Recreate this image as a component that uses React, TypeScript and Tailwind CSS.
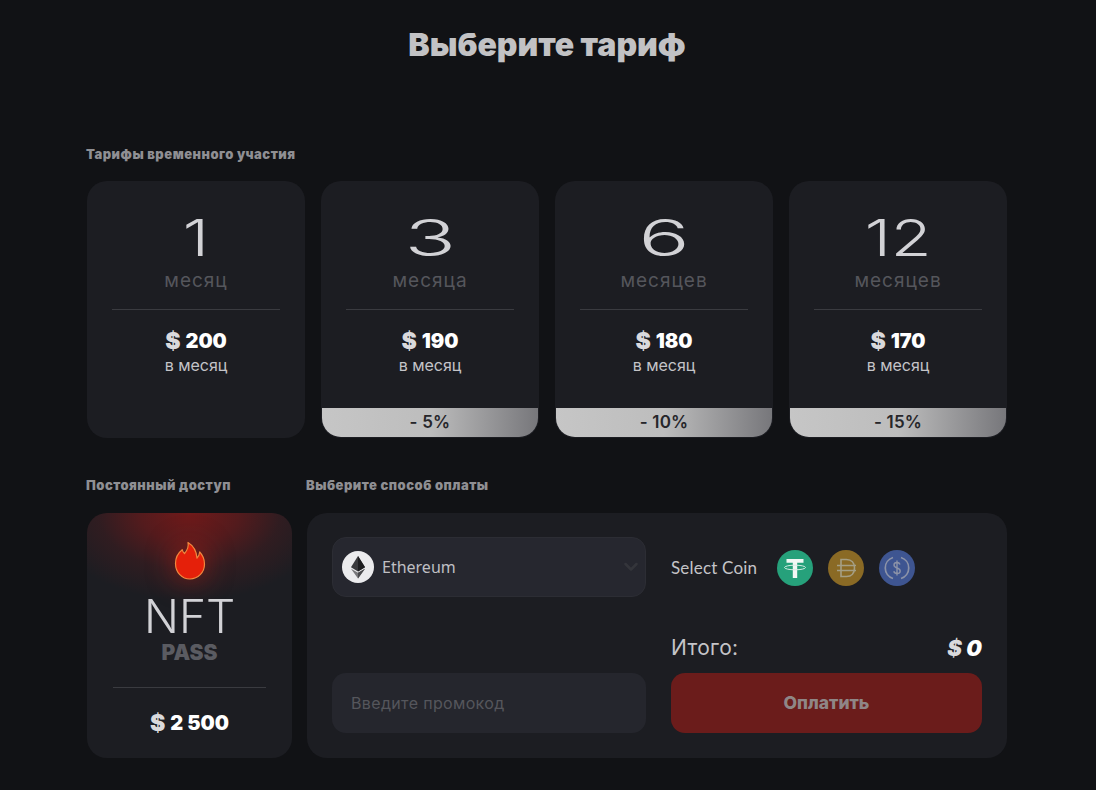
const inter = "font-['Inter','Liberation_Sans',sans-serif]";

function Plan({ n, unit, price, off, wide }: { n: string; unit: string; price: string; off?: string; wide?: boolean }) {
  return (
    <div className="relative h-[257px] w-[218px] overflow-hidden rounded-[20px] bg-[#1c1d22] px-[25px] pt-[28px]">
      <div className="flex h-[58px] items-center justify-center">
        <span className={`inline-block origin-center text-[50px] font-light leading-none text-[#d2d2d6] ${wide ? "scale-x-[1.7]" : "scale-x-[1.33]"}`}>{n}</span>
      </div>
      <div className="mt-[3px] text-center text-[19px] leading-[22px] tracking-[1px] text-[#55565c]">{unit}</div>
      <div className="mt-[17px] h-px bg-[#3a3b40]" />
      <div className="mt-[19px] flex items-center justify-center gap-[5px] text-[20px] font-black leading-[24px] text-white">
        <span className="text-[23px] text-[#d9d9dc]">$</span>
        <span>{price}</span>
      </div>
      <div className="mt-[2px] text-center text-[16px] leading-[20px] text-[#c4c4c8]">в месяц</div>
      {off && (
        <div className="absolute inset-x-px bottom-px flex h-[29px] items-center justify-center rounded-b-[19px] bg-[linear-gradient(90deg,#c6c6c6_0%,#bdbdbd_50%,#77777b_100%)] text-[17px] font-semibold tracking-[0.2px] text-[#26262a]">
          {off}
        </div>
      )}
    </div>
  );
}

function Label({ children, className = "" }: { children: string; className?: string }) {
  return <div className={`text-[13px] font-black leading-[16px] tracking-[0.5px] text-[#8f8f93] ${className}`}>{children}</div>;
}

export default function App() {
  return (
    <div className={`${inter} min-h-[790px] bg-[#111215]`}>
      <div className="w-[920px] pt-[25px] [margin-left:87px]">
        <h1 className="text-center text-[32px] font-black leading-[40px] text-[#c2c2c4]">Выберите тариф</h1>

        <Label className="mt-[81px] -ml-px">Тарифы временного участия</Label>
        <div className="mt-[19px] flex gap-4">
          <Plan n="1" unit="месяц" price="200" />
          <Plan n="3" unit="месяца" price="190" off="- 5%" wide />
          <Plan n="6" unit="месяцев" price="180" off="- 10%" wide />
          <Plan n="12" unit="месяцев" price="170" off="- 15%" />
        </div>

        <div className="mt-[39px] flex gap-[15px]">
          <div className="w-[205px]">
            <Label className="-ml-px">Постоянный доступ</Label>
            <div className="relative mt-[20px] flex h-[245px] flex-col items-center overflow-hidden rounded-[20px] bg-[#1c1d22] bg-[radial-gradient(ellipse_140px_88px_at_50%_0%,#701a1a_0%,rgba(105,26,27,0.72)_35%,rgba(90,27,30,0.32)_65%,rgba(28,29,35,0)_100%)] px-[26px] pt-[28px]">
              <svg width="32" height="40" viewBox="0 0 32 40" className="drop-shadow-[0_0_14px_rgba(200,30,20,0.6)]">
                <path
                  d="M14 1.500c1.200 5-1 8-3.500 11-1.200-1-2-2.300-2.300-3.800C4 12 1.500 17 1.500 22.500 1.500 31.500 8 38 16 38s14.500-6.500 14.500-15c0-5-2-9-4.800-12-.3 2.500-1 4.500-2.700 6.200C22.500 10 19 4.500 14 1.500Z"
                  fill="#e5200a"
                  stroke="#f0883f"
                  strokeWidth="1.200"
                  strokeLinejoin="round"
                />
              </svg>
              <div className="mt-[10px] text-[46px] font-light leading-[50px] text-[#d2d2d6] [will-change:transform]">NFT</div>
              <div className="text-[21px] font-black leading-[24px] text-[#5a5b61]">PASS</div>
              <div className="mt-[22px] h-px w-full bg-[#3a3b40]" />
              <div className="mt-[23px] flex items-center gap-[5px] text-[20px] font-black leading-[24px] text-white">
                <span className="text-[23px] text-[#d9d9dc]">$</span>
                <span>2 500</span>
              </div>
            </div>
          </div>

          <div className="w-[700px]">
            <Label className="-ml-px">Выберите способ оплаты</Label>
            <div className="mt-[20px] grid h-[245px] grid-cols-[314px_311px] justify-between rounded-[20px] bg-[#1c1d22] px-[25px] pb-[25px] pt-[24px]">
              <div className="flex flex-col justify-between">
                <div className="flex h-[60px] items-center rounded-[14px] border border-[#2c2d34] bg-[#26272f] pl-[9px] pr-[6px]">
                  <svg width="32" height="32" viewBox="0 0 32 32" className="shrink-0">
                    <circle cx="16" cy="16" r="16" fill="#ebebed" />
                    <path d="M16 5l-7 11.300 7 4.100 7-4.100z" fill="#3a3a3d" />
                    <path d="M16 5v15.400l7-4.100z" fill="#1e1e20" />
                    <path d="M9 17.700l7 9.800 7-9.800-7 4.100z" fill="#77777a" />
                    <path d="M16 21.800v5.700l7-9.800z" fill="#4a4a4d" />
                  </svg>
                  <span className="ml-[8px] text-[16px] text-[#bfbfc3] font-['Noto_Sans','Inter',sans-serif]">Ethereum</span>
                  <svg width="16" height="16" viewBox="0 0 16 16" className="ml-auto" fill="none" stroke="#34353b" strokeWidth="2.500" strokeLinecap="round" strokeLinejoin="round">
                    <path d="M2.500 5l5.500 5.500L13.500 5" />
                  </svg>
                </div>
                <div className="flex h-[60px] items-center rounded-[14px] bg-[#25262d] px-[19px] text-[16px] tracking-[0.35px] text-[#55565c]">Введите промокод</div>
              </div>

              <div className="flex flex-col">
                <div className="mt-[13px] flex h-[36px] items-center">
                  <span className="text-[17px] text-[#c4c4c8] font-['Lato','Inter',sans-serif] tracking-[0.2px]">Select Coin</span>
                  <div className="ml-[20px] flex gap-[15px]">
                    <svg width="36" height="36" viewBox="0 0 36 36">
                      <circle cx="18" cy="18" r="18" fill="#26a17b" />
                      <path d="M9.500 9h17v3.800h-6.300V28h-4.400V12.800H9.500z" fill="#f2f7f5" />
                      <ellipse cx="18" cy="17.500" rx="10.500" ry="2.300" fill="none" stroke="#d7ece5" strokeWidth="1" />
                    </svg>
                    <svg width="36" height="36" viewBox="0 0 36 36" fill="none" stroke="#a59f85" strokeWidth="1.600">
                      <circle cx="18" cy="18" r="18" fill="#8a6a25" stroke="none" />
                      <path d="M13 9.500h5.500c5 0 8 3.500 8 8.500s-3 8.500-8 8.500H13z" />
                      <path d="M9 15.500h19M9 20.500h19" />
                    </svg>
                    <svg width="36" height="36" viewBox="0 0 36 36" fill="none" stroke="#8c93a8" strokeWidth="1.700">
                      <circle cx="18" cy="18" r="18" fill="#3e5591" stroke="none" />
                      <path d="M14 7.500a11 11 0 0 0 0 21M22 7.500a11 11 0 0 1 0 21" />
                      <path d="M21 14.500c-.5-1.500-1.700-2-3-2-1.800 0-3 1-3 2.600 0 3.800 6.200 2 6.200 5.800 0 1.600-1.400 2.600-3.200 2.600-1.500 0-2.800-.7-3.200-2.200M18 10.500v15" strokeWidth="1.400" />
                    </svg>
                  </div>
                </div>
                <div className="mt-auto flex h-[28px] items-center justify-between">
                  <span className="text-[21px] tracking-[0.3px] text-[#c4c4c8]">Итого:</span>
                  <span className="text-[22px] font-black italic text-white">
                    <span className="text-[#d9d9dc]">$</span> 0
                  </span>
                </div>
                <div className="mt-[11px] flex h-[60px] items-center justify-center rounded-[14px] bg-[#6b1c1b] text-[17.5px] font-extrabold text-[#8f8686]">Оплатить</div>
              </div>
            </div>
          </div>
        </div>
      </div>
    </div>
  );
}
